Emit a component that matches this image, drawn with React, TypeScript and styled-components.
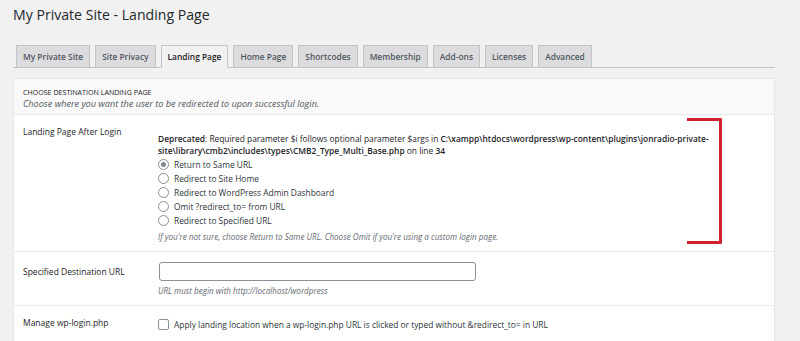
import React from "react";
import styled, { createGlobalStyle } from "styled-components";

const Global = createGlobalStyle`
  html, body { margin: 0; padding: 0; }
  body {
    background: #f1f1f1;
    font-family: "Open Sans", "Noto Sans", sans-serif;
    color: #3c434a;
    width: 800px;
    height: 341px;
    overflow: hidden;
  }
`;

const Wrap = styled.div`
  padding: 0 25px 0 13px;
  position: relative;
`;

const Title = styled.h1`
  margin: 0;
  padding-top: 4px;
  font-size: 14.1px;
  line-height: 22px;
  font-weight: 400;
  color: #23282d;
`;

const TabBar = styled.nav`
  margin-top: 19px;
  display: flex;
  align-items: flex-end;
  gap: 5px;
  padding-left: 3px;
  border-bottom: 1px solid #c3c4c7;
  height: 22px;
`;

const Tab = styled.a<{ $active?: boolean }>`
  display: flex;
  align-items: center;
  justify-content: center;
  box-sizing: border-box;
  height: ${(p) => (p.$active ? "23px" : "22px")};
  margin-bottom: ${(p) => (p.$active ? "-1px" : "0")};
  padding: 0 6px;
  border: 1px solid #c3c4c7;
  border-bottom: ${(p) => (p.$active ? "1px solid #f1f1f1" : "none")};
  background: ${(p) => (p.$active ? "#f1f1f1" : "#dcdcde")};
  color: ${(p) => (p.$active ? "#1d2327" : "#50575e")};
  font-size: 8.4px;
  font-weight: 600;
  white-space: nowrap;
  text-decoration: none;
`;

const Panel = styled.section`
  margin-top: 10px;
  background: #fff;
  border: 1px solid #e5e5e5;
  border-bottom: none;
`;

const PanelHead = styled.div`
  background: #f9f9f9;
  padding: 8px 9px 0;
  height: 27px;
  border-bottom: 1px solid #e8e8e8;
`;

const HeadTitle = styled.div`
  font-size: 7.1px;
  line-height: 11px;
  color: #1d2327;
  text-transform: uppercase;
`;

const HeadDesc = styled.div`
  font-size: 9.1px;
  line-height: 12px;
  font-style: italic;
  color: #50575e;
`;

const Row = styled.div<{ $h: number }>`
  display: flex;
  height: ${(p) => p.$h}px;
  box-sizing: border-box;
  border-bottom: 1px solid #ececec;
  padding-left: 9px;
`;

const Label = styled.div<{ $top: number }>`
  width: 135px;
  flex: none;
  padding-top: ${(p) => p.$top}px;
  font-size: 8.5px;
  line-height: 12px;
  color: #1d2327;
`;

const Field = styled.div<{ $top: number }>`
  flex: 1;
  padding-top: ${(p) => p.$top}px;
  font-size: 8.4px;
  color: #3c434a;
`;

const Notice = styled.div`
  font-size: 8.4px;
  line-height: 12px;
  color: #1d2327;
  b { font-weight: 600; }
`;

const RadioList = styled.div`
  display: flex;
  flex-direction: column;
`;

const Option = styled.label`
  display: flex;
  align-items: center;
  gap: 5px;
  height: 14px;
  font-size: 8.4px;
  color: #2c3338;
`;

const Radio = styled.span<{ $checked?: boolean }>`
  box-sizing: border-box;
  width: 11px;
  height: 11px;
  border-radius: 50%;
  border: 1px solid #8c8f94;
  background: #fff;
  display: flex;
  align-items: center;
  justify-content: center;
  &::after {
    content: "";
    display: ${(p) => (p.$checked ? "block" : "none")};
    width: 5px;
    height: 5px;
    border-radius: 50%;
    background: #7e8993;
  }
`;

const Check = styled.span`
  box-sizing: border-box;
  width: 11px;
  height: 11px;
  border-radius: 2px;
  border: 1px solid #8c8f94;
  background: #fff;
`;

const Help = styled.div<{ $mt: number }>`
  margin-top: ${(p) => p.$mt}px;
  font-size: 8.1px;
  line-height: 10px;
  font-style: italic;
  color: #646970;
`;

const Input = styled.div`
  box-sizing: border-box;
  width: 317px;
  height: 19px;
  margin-left: 1px;
  border: 1px solid #8c8f94;
  border-radius: 3px;
  background: #fff;
`;

const Bracket = styled.div`
  position: absolute;
  left: 687px;
  top: 118px;
  width: 35px;
  height: 126px;
  box-sizing: border-box;
  border: 3px solid #d0202e;
  border-left: none;
  border-radius: 0 2px 2px 0;
`;

const tabs = [
  "My Private Site",
  "Site Privacy",
  "Landing Page",
  "Home Page",
  "Shortcodes",
  "Membership",
  "Add-ons",
  "Licenses",
  "Advanced",
];

const options = [
  "Return to Same URL",
  "Redirect to Site Home",
  "Redirect to WordPress Admin Dashboard",
  "Omit ?redirect_to= from URL",
  "Redirect to Specified URL",
];

export default function App() {
  return (
    <>
      <Global />
      <Wrap>
        <Title>My Private Site - Landing Page</Title>
        <TabBar>
          {tabs.map((t) => (
            <Tab key={t} $active={t === "Landing Page"}>
              {t}
            </Tab>
          ))}
        </TabBar>
        <Panel>
          <PanelHead>
            <HeadTitle>Choose Destination Landing Page</HeadTitle>
            <HeadDesc>Choose where you want the user to be redirected to upon successful login.</HeadDesc>
          </PanelHead>
          <Row $h={137}>
            <Label $top={11}>Landing Page After Login</Label>
            <Field $top={18}>
              <Notice>
                <b>Deprecated</b>: Required parameter $i follows optional parameter $args in{" "}
                <b>C:\xampp\htdocs\wordpress\wp-content\plugins\jonradio-private-site\library\cmb2\includes\types\CMB2_Type_Multi_Base.php</b>{" "}
                on line <b>34</b>
              </Notice>
              <RadioList>
                {options.map((o, i) => (
                  <Option key={o}>
                    <Radio $checked={i === 0} />
                    {o}
                  </Option>
                ))}
              </RadioList>
              <Help $mt={5}>
                If you're not sure, choose Return to Same URL. Choose Omit if you're using a custom login page.
              </Help>
            </Field>
          </Row>
          <Row $h={54}>
            <Label $top={14}>Specified Destination URL</Label>
            <Field $top={10}>
              <Input />
              <Help $mt={5}>URL must begin with http://localhost/wordpress</Help>
            </Field>
          </Row>
          <Row $h={40}>
            <Label $top={11}>Manage wp-login.php</Label>
            <Field $top={11}>
              <Option>
                <Check />
                Apply landing location when a wp-login.php URL is clicked or typed without &amp;redirect_to= in URL
              </Option>
            </Field>
          </Row>
        </Panel>
        <Bracket />
      </Wrap>
    </>
  );
}
